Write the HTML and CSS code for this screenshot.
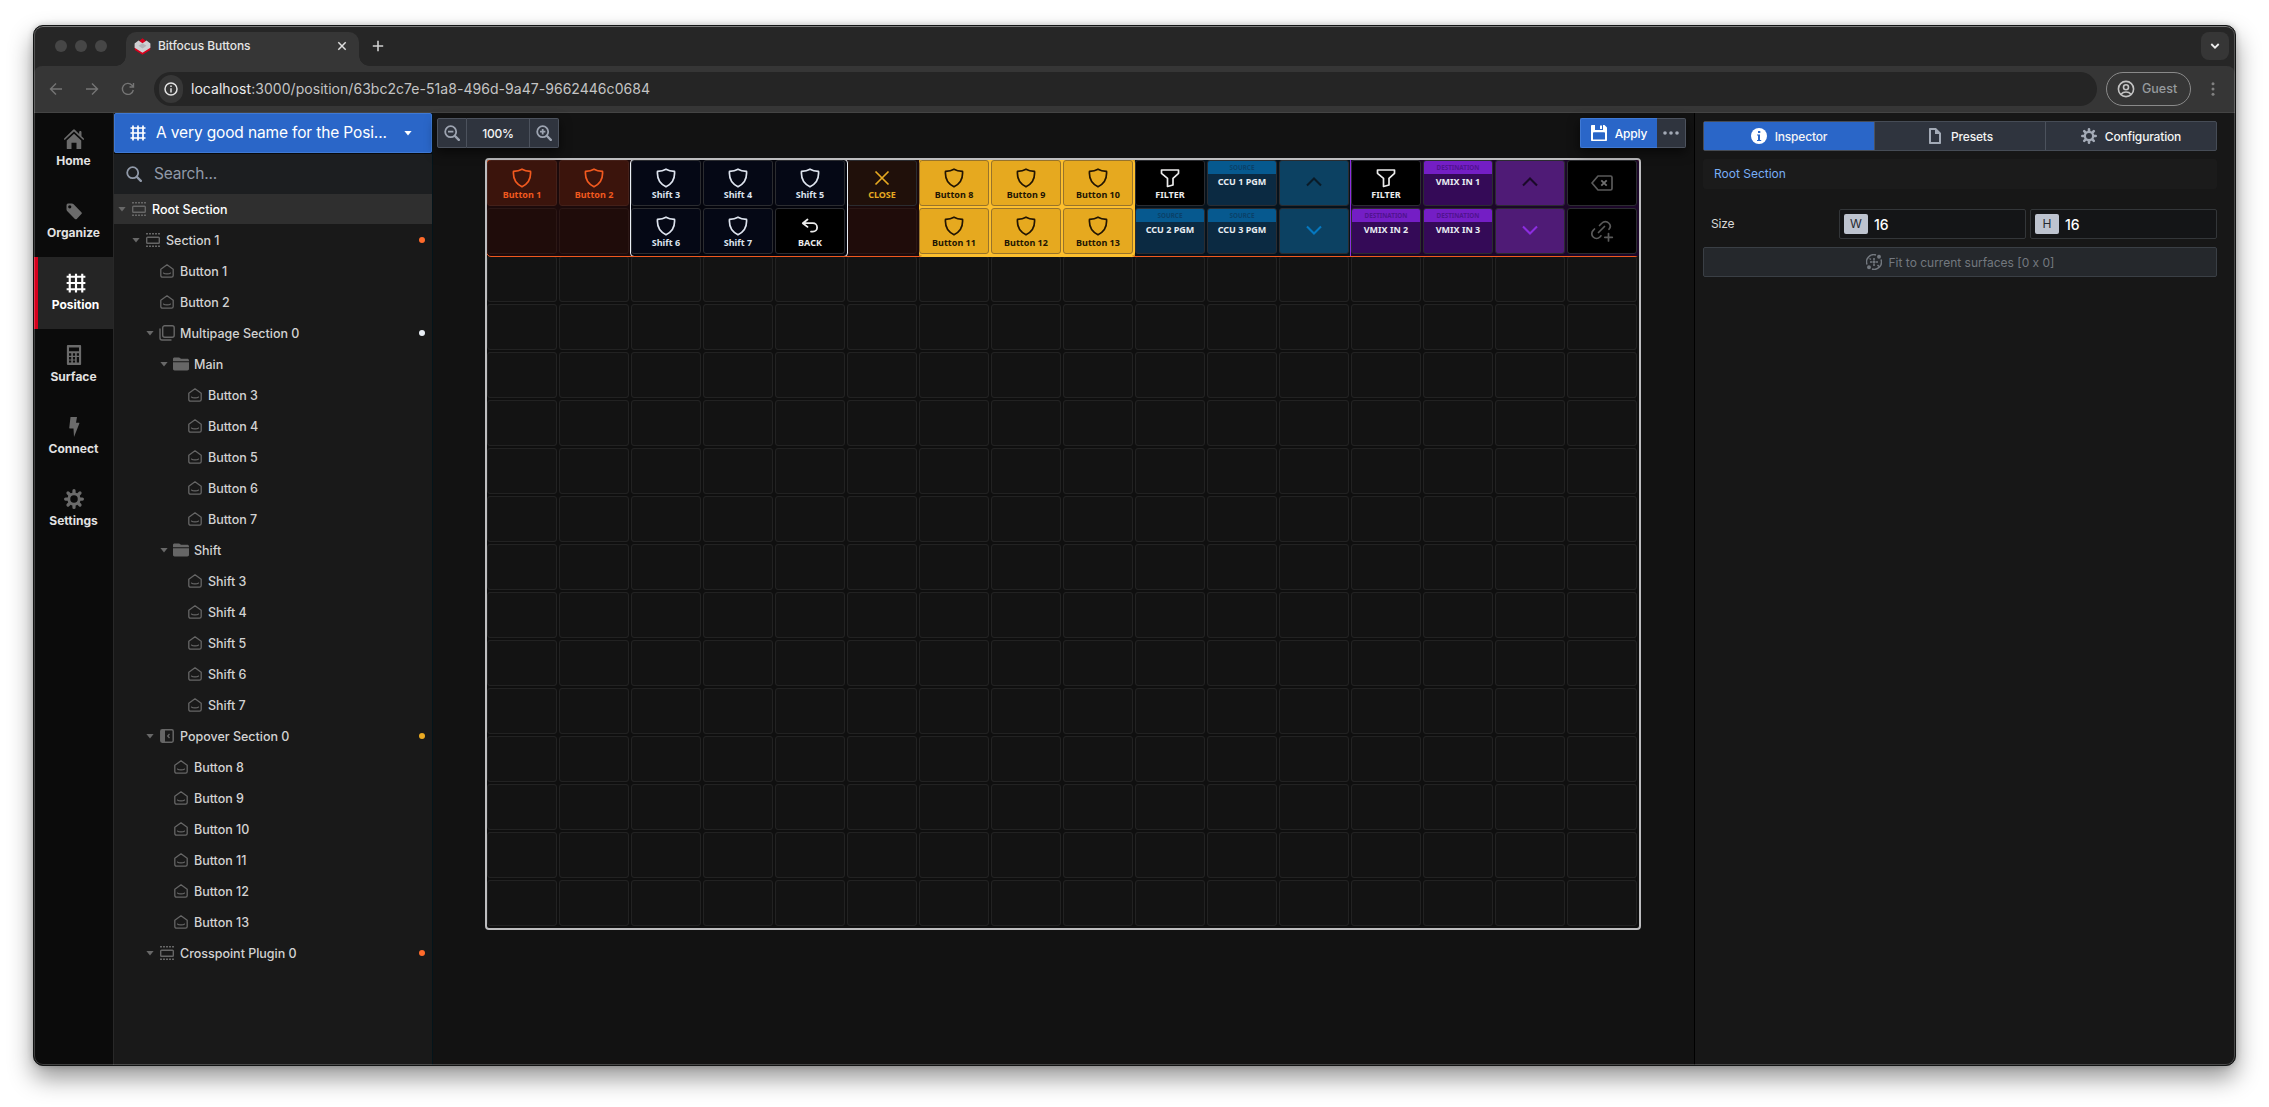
FILE: index.html
```html
<!DOCTYPE html>
<html lang="en">
<head>
<meta charset="utf-8">
<title>Bitfocus Buttons</title>
<link rel="stylesheet" href="styles.css">
</head>
<body>
<svg class="defs" width="0" height="0">
  <symbol id="grid" viewBox="0 0 16 16"><path d="M3 .5v15M8 .5v15M13 .5v15M.5 3h15M.5 8h15M.5 13h15" fill="none" stroke="currentColor" stroke-width="1.7"/></symbol>
  <symbol id="home" viewBox="0 0 16 16"><path d="M8 3.7 2.2 9.1V15.5c0 .3.2.5.5.5H6v-5h4v5h3.300c.3 0 .5-.2.5-.5V9.100zM15.700 7.300 14 5.700V2.500c0-.5-.4-.9-.9-.9s-1 .4-1 .9v1.400L8.700.600a1 1 0 0 0-1.400 0l-7 6.700c-.4.4-.4.900 0 1.200l.3.200L8 2l7.400 6.700.3-.2c.4-.4.4-.8 0-1.200z" fill="currentColor"/></symbol>
  <symbol id="tag" viewBox="0 0 16 16"><path d="M2 3.500C2 2.400 2.800 2 3.500 2H6.200c.6 0 1.100.2 1.500.6l6.200 6.300c.5.5.5 1 0 1.500l-3.700 3.900c-.5.5-1 .5-1.500 0L2.500 8C2.200 7.600 2 7 2 6.500zM4.600 3.300a1.300 1.300 0 1 0 0 2.600 1.300 1.300 0 0 0 0-2.600z" fill="currentColor" fill-rule="evenodd"/></symbol>
  <symbol id="calc" viewBox="0 0 16 16"><path d="M3.200 0h9.600c.5 0 .9.400.9.900v14.200c0 .5-.4.900-.9.900H3.200a.9.900 0 0 1-.9-.9V.900C2.300.400 2.700 0 3.200 0zM4 2v3h8V2zM4 6.500v2h1.800v-2zm3.100 0v2h1.800v-2zm3.100 0v2H12v-2zM4 9.500v2h1.800v-2zm3.100 0v2h1.800v-2zm3.100 0V14H12V9.500zM4 12.300V14h1.800v-1.700zm3.100 0V14h1.800v-1.700z" fill="currentColor" fill-rule="evenodd"/></symbol>
  <symbol id="bolt" viewBox="0 0 16 16"><path d="M5.200 0h5.200l-.8 4.600h2.200c.5 0 .6.400.4.800L8 16l-.4-6.800H4.700c-.4 0-.6-.2-.5-.6z" fill="currentColor"/></symbol>
  <symbol id="cog" viewBox="0 0 16 16"><path d="M8 1.300v13.400M1.300 8h13.400M3.200 3.200l9.600 9.600M12.800 3.200l-9.600 9.600" stroke="currentColor" stroke-width="2.600" stroke-linecap="round" fill="none"/><circle cx="8" cy="8" r="5.300" fill="currentColor"/><circle cx="8" cy="8" r="3" fill="var(--hole)"/></symbol>
  <symbol id="search" viewBox="0 0 16 16"><circle cx="6.700" cy="6.700" r="5.500" fill="none" stroke="currentColor" stroke-width="1.800"/><path d="m11 11 3.800 3.800" stroke="currentColor" stroke-width="2.400" stroke-linecap="round"/></symbol>
  <symbol id="zoomout" viewBox="0 0 16 16"><use href="#search"/><path d="M4 6.700h5.400" stroke="currentColor" stroke-width="1.800"/></symbol>
  <symbol id="zoomin" viewBox="0 0 16 16"><use href="#zoomout"/><path d="M6.700 4v5.400" stroke="currentColor" stroke-width="1.800"/></symbol>
  <symbol id="section" viewBox="0 0 14 14"><rect x=".7" y="4.200" width="12.600" height="6" rx=".8" fill="none" stroke="currentColor" stroke-width="1.400"/><path d="M0 .8h14M0 13.200h14" stroke="currentColor" stroke-width="1.500" stroke-dasharray="2 1"/></symbol>
  <symbol id="button" viewBox="0 0 14 14"><path d="M.8 5.300 7 .8l6.200 4.500v6.200a1.700 1.700 0 0 1-1.700 1.700h-9A1.700 1.700 0 0 1 .8 11.500zM3.600 9.100c1 1.100 5.800 1.100 6.800 0" fill="none" stroke="currentColor" stroke-width="1.300" stroke-linejoin="round" stroke-linecap="round"/></symbol>
  <symbol id="multi" viewBox="0 0 16 16"><rect x="3.700" y=".8" width="11.500" height="11.500" rx="2" fill="none" stroke="currentColor" stroke-width="1.400"/><path d="M1 4v9a2 2 0 0 0 2 2h9" fill="none" stroke="currentColor" stroke-width="1.400" stroke-linecap="round"/></symbol>
  <symbol id="folder" viewBox="0 0 16 14"><path d="M0 4.300V2C0 1 .7.500 1.500.500h4.300c.6 0 1 .2 1.300.6l.7.700h6.400c1 0 1.800.7 1.800 1.600v.9z" fill="currentColor"/><path d="M0 5.200h16v6.600c0 1-.7 1.700-1.700 1.700H1.700C.7 13.500 0 12.800 0 11.800z" fill="currentColor"/></symbol>
  <symbol id="popover" viewBox="0 0 14 14"><rect x=".8" y=".8" width="12.400" height="12.400" rx="1.400" fill="none" stroke="currentColor" stroke-width="1.500"/><path d="M1 1h4v12H1z" fill="currentColor"/><path d="M9.500 5 7.700 7l1.800 2" fill="none" stroke="currentColor" stroke-width="1.300"/></symbol>
  <symbol id="shield" viewBox="0 0 20 20"><path d="M10 1.200c2.400 1.400 5 2 8.500 2.200.6 7-2.500 12.500-8.500 15.400C4 15.900.9 10.400 1.500 3.400 5 3.200 7.600 2.600 10 1.200z" fill="none" stroke="currentColor" stroke-width="1.700" stroke-linejoin="round"/></symbol>
  <symbol id="undo" viewBox="0 0 20 20"><path d="M7.500 3.500 2.800 7.200l4.700 3.700M3.200 7.200h9.700a4.200 4.200 0 0 1 0 8.400H11" fill="none" stroke="currentColor" stroke-width="1.800" stroke-linecap="round" stroke-linejoin="round"/></symbol>
  <symbol id="cross" viewBox="0 0 20 20"><path d="m3.500 3.500 13 13m0-13-13 13" stroke="currentColor" stroke-width="1.700"/></symbol>
  <symbol id="filter" viewBox="0 0 20 20"><path d="M1.500 2h17v3.300l-5.500 5V17l-5.500 1.500V10.300L1.500 5.300z" fill="none" stroke="currentColor" stroke-width="1.700" stroke-linejoin="round"/></symbol>
  <symbol id="up" viewBox="0 0 16 10"><path d="M1 8.500 8 1.500l7 7" fill="none" stroke="currentColor" stroke-width="2.100"/></symbol>
  <symbol id="down" viewBox="0 0 16 10"><path d="m1 1.500 7 7 7-7" fill="none" stroke="currentColor" stroke-width="2.100"/></symbol>
</svg>

<div class="window">
  <header class="tabstrip">
    <span class="light"></span><span class="light"></span><span class="light"></span>
    <div class="tab">
      <svg width="17" height="17" viewBox="0 0 17 17"><path d="M8.500.300 12.500 3.500 8.500 6 4.500 3.500zM.8 8v4L8.500 16.700l7.700-4.700V8l-7.700 5z" fill="#d6001c"/><path d="M4.500 2.500 8.500 5.200l4-2.700 3.900 3v4.300l-7.900 5-7.900-5V5.500z" fill="#cfcfd2"/><path d="m8.500 5.200 4 2.600-4 2.700-4-2.700z" fill="#b3b3b7"/></svg>
      <span class="tab-title">Bitfocus Buttons</span>
      <svg width="10" height="10" viewBox="0 0 10 10"><path d="m1.300 1.300 7.400 7.400m0-7.400L1.300 8.700" stroke="#dedede" stroke-width="1.500"/></svg>
    </div>
    <svg class="newtab" width="12" height="12" viewBox="0 0 12 12"><path d="M6 .8v10.400M.8 6h10.400" stroke="#d0d0d0" stroke-width="1.600"/></svg>
    <span class="tabsearch"><svg width="10" height="8" viewBox="0 0 10 8"><path d="m1.300 2 3.700 3.700L8.700 2" fill="none" stroke="#eee" stroke-width="1.800"/></svg></span>
  </header>
  <div class="toolbar">
    <svg class="nav-ic" width="14" height="14" viewBox="0 0 14 14"><path d="M13 7H1.700M7 1.500 1.500 7 7 12.500" fill="none" stroke="currentColor" stroke-width="1.400"/></svg>
    <svg class="nav-ic" width="14" height="14" viewBox="0 0 14 14"><path d="M1 7h11.300M7 1.500 12.500 7 7 12.500" fill="none" stroke="currentColor" stroke-width="1.400"/></svg>
    <svg class="nav-ic" width="14" height="14" viewBox="0 0 14 14"><path d="M12.300 8A5.500 5.500 0 1 1 11 3.200l1.300 1.300M12.500 1v4h-4" fill="none" stroke="currentColor" stroke-width="1.400"/></svg>
    <div class="url">
      <span class="info"><svg width="14" height="14" viewBox="0 0 14 14"><circle cx="7" cy="7" r="6" fill="none" stroke="#e3e3e3" stroke-width="1.500"/><path d="M7 6.200v4.300M7 3.500V5" stroke="#e3e3e3" stroke-width="1.500"/></svg></span>
      <span class="addr"><b>localhost</b>:3000/position/63bc2c7e-51a8-496d-9a47-9662446c0684</span>
    </div>
    <div class="guest">
      <svg width="18" height="18" viewBox="0 0 18 18" fill="none" stroke="#c4c4c4" stroke-width="1.600"><circle cx="9" cy="9" r="7.600"/><circle cx="9" cy="7.300" r="2.500"/><path d="M4 14.200c1.300-1.500 3-2.200 5-2.200s3.700.7 5 2.200"/></svg>
      <span>Guest</span>
    </div>
    <svg class="kebab" width="4" height="14" viewBox="0 0 4 14" fill="#818181"><circle cx="2" cy="1.700" r="1.500"/><circle cx="2" cy="7" r="1.500"/><circle cx="2" cy="12.300" r="1.500"/></svg>
  </div>

  <main class="app">
    <nav class="nav">
      <a class="nav-item"><svg class="i20"><use href="#home"/></svg>Home</a>
      <a class="nav-item"><svg class="i20"><use href="#tag"/></svg>Organize</a>
      <a class="nav-item active"><svg class="i20"><use href="#grid"/></svg>Position</a>
      <a class="nav-item"><svg class="i20"><use href="#calc"/></svg>Surface</a>
      <a class="nav-item"><svg class="i20"><use href="#bolt"/></svg>Connect</a>
      <a class="nav-item"><svg class="i20"><use href="#cog"/></svg>Settings</a>
    </nav>

    <aside class="sidebar">
      <div class="picker"><svg class="i16"><use href="#grid"/></svg><span>A very good name for the Posi...</span><i class="caret white"></i></div>
      <div class="search"><svg class="i16"><use href="#search"/></svg><span>Search...</span></div>
      <ul class="tree">
        <li class="l0 selected"><i class="caret"></i><svg class="i14"><use href="#section"/></svg>Root Section</li>
        <li class="l1"><i class="caret"></i><svg class="i14"><use href="#section"/></svg>Section 1<em class="dot orange"></em></li>
        <li class="l2 leaf"><svg class="i14"><use href="#button"/></svg>Button 1</li>
        <li class="l2 leaf"><svg class="i14"><use href="#button"/></svg>Button 2</li>
        <li class="l2"><i class="caret"></i><svg class="i16 wide"><use href="#multi"/></svg>Multipage Section 0<em class="dot white"></em></li>
        <li class="l3"><i class="caret"></i><svg class="i16 wide"><use href="#folder"/></svg>Main</li>
        <li class="l4 leaf"><svg class="i14"><use href="#button"/></svg>Button 3</li>
        <li class="l4 leaf"><svg class="i14"><use href="#button"/></svg>Button 4</li>
        <li class="l4 leaf"><svg class="i14"><use href="#button"/></svg>Button 5</li>
        <li class="l4 leaf"><svg class="i14"><use href="#button"/></svg>Button 6</li>
        <li class="l4 leaf"><svg class="i14"><use href="#button"/></svg>Button 7</li>
        <li class="l3"><i class="caret"></i><svg class="i16 wide"><use href="#folder"/></svg>Shift</li>
        <li class="l4 leaf"><svg class="i14"><use href="#button"/></svg>Shift 3</li>
        <li class="l4 leaf"><svg class="i14"><use href="#button"/></svg>Shift 4</li>
        <li class="l4 leaf"><svg class="i14"><use href="#button"/></svg>Shift 5</li>
        <li class="l4 leaf"><svg class="i14"><use href="#button"/></svg>Shift 6</li>
        <li class="l4 leaf"><svg class="i14"><use href="#button"/></svg>Shift 7</li>
        <li class="l2"><i class="caret"></i><svg class="i14"><use href="#popover"/></svg>Popover Section 0<em class="dot yellow"></em></li>
        <li class="l3 leaf"><svg class="i14"><use href="#button"/></svg>Button 8</li>
        <li class="l3 leaf"><svg class="i14"><use href="#button"/></svg>Button 9</li>
        <li class="l3 leaf"><svg class="i14"><use href="#button"/></svg>Button 10</li>
        <li class="l3 leaf"><svg class="i14"><use href="#button"/></svg>Button 11</li>
        <li class="l3 leaf"><svg class="i14"><use href="#button"/></svg>Button 12</li>
        <li class="l3 leaf"><svg class="i14"><use href="#button"/></svg>Button 13</li>
        <li class="l2"><i class="caret"></i><svg class="i14"><use href="#section"/></svg>Crosspoint Plugin 0<em class="dot orange"></em></li>
      </ul>
    </aside>

    <section class="canvas">
      <div class="canvas-bar">
        <div class="btn-group">
          <span class="btn z"><svg class="i16"><use href="#zoomout"/></svg></span>
          <span class="btn pct">100%</span>
          <span class="btn z"><svg class="i16"><use href="#zoomin"/></svg></span>
        </div>
        <div class="btn-group">
          <span class="btn apply"><svg width="16" height="16" viewBox="0 0 16 16"><path d="M0 .8C0 .4.400 0 .8 0H4v5h8V0h1.500L16 2.500v12.700c0 .4-.4.800-.8.800H.8a.8.800 0 0 1-.8-.8zM2 8v6.500h12V8c0-.5-.3-.8-.8-.8H2.800c-.5 0-.8.3-.8.8zM9 .5h2V4H9z" fill="#fff" fill-rule="evenodd"/></svg>Apply</span>
          <span class="btn more"><svg width="16" height="4" viewBox="0 0 16 4" fill="#a3aab6"><circle cx="2" cy="2" r="1.800"/><circle cx="8" cy="2" r="1.800"/><circle cx="14" cy="2" r="1.800"/></svg></span>
        </div>
      </div>

      <div class="board">
        <div class="root-row">
          <div class="group c2">
            <div class="cell fire"><svg class="i20"><use href="#shield"/></svg>Button 1</div>
            <div class="cell fire"><svg class="i20"><use href="#shield"/></svg>Button 2</div>
            <div class="cell empty"></div>
            <div class="cell empty"></div>
          </div>
          <div class="group c3 multipage">
            <div class="cell navy"><svg class="i20"><use href="#shield"/></svg>Shift 3</div>
            <div class="cell navy"><svg class="i20"><use href="#shield"/></svg>Shift 4</div>
            <div class="cell navy"><svg class="i20"><use href="#shield"/></svg>Shift 5</div>
            <div class="cell navy"><svg class="i20"><use href="#shield"/></svg>Shift 6</div>
            <div class="cell navy"><svg class="i20"><use href="#shield"/></svg>Shift 7</div>
            <div class="cell black"><svg class="i20"><use href="#undo"/></svg>BACK</div>
          </div>
          <div class="group c1">
            <div class="cell close"><svg class="i20"><use href="#cross"/></svg>CLOSE</div>
            <div class="cell empty"></div>
          </div>
          <div class="group c3 pop">
            <div class="cell gold"><svg class="i20"><use href="#shield"/></svg>Button 8</div>
            <div class="cell gold"><svg class="i20"><use href="#shield"/></svg>Button 9</div>
            <div class="cell gold"><svg class="i20"><use href="#shield"/></svg>Button 10</div>
            <div class="cell gold"><svg class="i20"><use href="#shield"/></svg>Button 11</div>
            <div class="cell gold"><svg class="i20"><use href="#shield"/></svg>Button 12</div>
            <div class="cell gold"><svg class="i20"><use href="#shield"/></svg>Button 13</div>
          </div>
          <div class="group c3 sources">
            <div class="cell black"><svg class="i20"><use href="#filter"/></svg>FILTER</div>
            <div class="cell source"><small>SOURCE</small>CCU 1 PGM</div>
            <div class="cell blue"><svg class="chev"><use href="#up"/></svg></div>
            <div class="cell source"><small>SOURCE</small>CCU 2 PGM</div>
            <div class="cell source"><small>SOURCE</small>CCU 3 PGM</div>
            <div class="cell blue lit"><svg class="chev"><use href="#down"/></svg></div>
          </div>
          <div class="group c4 dests">
            <div class="cell black"><svg class="i20"><use href="#filter"/></svg>FILTER</div>
            <div class="cell dest"><small>DESTINATION</small>VMIX IN 1</div>
            <div class="cell purple"><svg class="chev"><use href="#up"/></svg></div>
            <div class="cell black tool"><svg width="22" height="16" viewBox="0 0 22 16"><path d="M7 1h12.500c.8 0 1.500.7 1.500 1.500v11c0 .8-.7 1.500-1.500 1.500H7L1 8z" fill="none" stroke="#5a5a5a" stroke-width="1.700" stroke-linejoin="round"/><path d="m10.300 5.300 5.400 5.400m0-5.400-5.400 5.400" stroke="#707070" stroke-width="1.800"/></svg></div>
            <div class="cell dest"><small>DESTINATION</small>VMIX IN 2</div>
            <div class="cell dest"><small>DESTINATION</small>VMIX IN 3</div>
            <div class="cell purple lit"><svg class="chev"><use href="#down"/></svg></div>
            <div class="cell black tool"><svg width="24" height="22" viewBox="0 0 24 22" fill="none" stroke="#5a5a5a" stroke-width="1.700" stroke-linecap="round"><path d="m8.500 12.500 6-6M9.500 5.500 12 3a4.600 4.600 0 0 1 6.700 0c1.900 1.900 1.900 4.500.3 6.300M4.500 9 3.200 10.300a4.700 4.700 0 0 0 0 6.700c1.900 1.900 4.800 1.900 6.700 0l1.100-1.200M18.500 13.500v7.500M14.800 17.300h7.500"/></svg></div>
          </div>
        </div>
        <svg class="free-cells" width="1152" height="672">
          <defs><pattern id="slot" width="72" height="48" patternUnits="userSpaceOnUse"><rect x=".5" y=".5" width="69" height="45" rx="2.500" fill="#131313" stroke="#222"/></pattern></defs>
          <rect width="1152" height="672" fill="url(#slot)"/>
        </svg>
      </div>
    </section>

    <aside class="inspector">
      <div class="tabs">
        <span class="on"><svg width="16" height="16" viewBox="0 0 16 16"><circle cx="8" cy="8" r="8" fill="#fff"/><path d="M7 3h2.300v2H7zM6 6.500h3V12h1.200v1H6v-1h1V7.500H6z" fill="#2a66c8"/></svg>Inspector</span>
        <span><svg width="16" height="16" viewBox="0 0 16 16"><path d="M9 0H3c-.6 0-1 .4-1 1v14c0 .6.400 1 1 1h10c.6 0 1-.4 1-1V5zm3 14H4V2h4v4h4z" fill="#a3aab6"/></svg>Presets</span>
        <span><svg class="i16 cog"><use href="#cog"/></svg>Configuration</span>
      </div>
      <div class="crumb">Root Section</div>
      <div class="size">
        <label>Size</label>
        <div class="field"><b>W</b>16</div>
        <div class="field"><b>H</b>16</div>
      </div>
      <div class="fit"><svg width="16" height="16" viewBox="0 0 16 16" fill="none" stroke="currentColor" stroke-width="1.500"><path d="M1 10.500A7.300 7.300 0 0 1 10 1M6 15A7.300 7.300 0 0 0 15 5.500"/><path d="M8 4v2.500M8 9.500V12M4 8h2.500M9.500 8H12" stroke-width="1.600"/><circle cx="13" cy="2.800" r="1.200" fill="currentColor"/><circle cx="3" cy="13.200" r="1.200" fill="currentColor"/><circle cx="8" cy="8" r=".5"/><path d="m11.500 11 1.500 1.500M3.500 4.500 5 5.500"/></svg>Fit to current surfaces [0 x 0]</div>
    </aside>
  </main>
</div>
</body>
</html>
```
FILE: styles.css
```css
* { box-sizing: border-box; }
body {
  margin: 0;
  height: 1107px;
  padding: 25px 33px 41px 33px;
  background: #fff;
  overflow: hidden;
  font-family: Inter, "Liberation Sans", sans-serif;
  font-size: 12.5px;
  color: #d8d8d8;
}
svg { flex: none; display: block; }
.defs { position: absolute; }
.i14 { width: 14px; height: 14px; }
.i16 { width: 16px; height: 16px; }
.i20 { width: 20px; height: 20px; }

.window {
  height: 1041px;
  border: 1px solid #121414;
  border-radius: 10px;
  overflow: hidden;
  position: relative;
  display: flex;
  flex-direction: column;
  background: #262626;
  box-shadow: 0 12px 24px rgba(0, 0, 0, .42), 0 0 6px rgba(0, 0, 0, .2);
}
/* light hairline just inside the window edge */
.window::after {
  content: "";
  position: absolute;
  inset: 0;
  border: 1px solid rgba(255, 255, 255, .22);
  border-top-color: rgba(255, 255, 255, .4);
  border-radius: 9px;
}

/* browser chrome */
.tabstrip {
  height: 40px;
  flex: none;
  background: #262626;
  display: flex;
  align-items: center;
  padding: 0 6px 0 21px;
}
.light { width: 12px; height: 12px; border-radius: 50%; background: #464646; margin-right: 8px; }
.tab {
  align-self: flex-end;
  position: relative;
  width: 233px;
  height: 34px;
  margin-left: 11px;
  padding: 0 12px 6px 8px;
  display: flex;
  align-items: center;
  background: #363636;
  border-radius: 10px 10px 0 0;
}
.tab::before, .tab::after {
  content: "";
  position: absolute;
  bottom: 0;
  width: 10px;
  height: 10px;
}
.tab::before { left: -10px; background: radial-gradient(circle at 0 0, #262626 9.500px, #363636 10px); }
.tab::after { right: -10px; background: radial-gradient(circle at 100% 0, #262626 9.500px, #363636 10px); }
.tab-title { flex: 1; margin-left: 7px; padding-bottom: 1px; font-size: 12px; font-weight: 500; letter-spacing: -.08px; color: #e4e4e4; }
.newtab { margin-left: 13px; }
.tabsearch {
  width: 28px;
  height: 28px;
  margin-left: auto;
  border-radius: 8px;
  background: #363636;
  display: grid;
  place-items: center;
}
.toolbar {
  height: 47px;
  flex: none;
  display: flex;
  align-items: center;
  padding: 0 20px 1px 15px;
  background: #363636;
  border-radius: 8px 8px 0 0;
  border-bottom: 1px solid #444;
}
.nav-ic { color: #757575; margin-right: 22px; }
.url {
  flex: 1;
  height: 34px;
  margin-left: -3px;
  padding-left: 5px;
  border-radius: 17px;
  background: #252525;
  display: flex;
  align-items: center;
}
.info { width: 24px; height: 28px; border-radius: 14px; background: #373737; display: grid; place-items: center; }
.addr { margin-left: 8px; font-size: 14px; letter-spacing: .04px; color: #c4c4c4; }
.addr b { font-weight: 400; color: #ececec; }
.guest {
  width: 85px;
  height: 34px;
  margin: 0 20px 0 9px;
  padding-left: 10px;
  border: 1px solid #8a8a8a;
  border-radius: 17px;
  display: flex;
  align-items: center;
  gap: 7px;
  color: #969b9e;
  font-size: 12.500px;
  font-weight: 500;
}

/* application shell */
.app { flex: 1; min-height: 0; display: flex; background: #121212; }
.nav { width: 80px; background: #0b0b0b; border-right: 1px solid #282828; --hole: #0b0b0b; }
.nav-item {
  height: 72px;
  display: flex;
  flex-direction: column;
  align-items: center;
  padding-top: 16px;
  gap: 4px;
  font-size: 12px;
  font-weight: 700;
  line-height: 15px;
  color: #e2e2e2;
}
.nav-item svg { color: #6b6b6b; }
.nav-item.active { background: #252525; border-left: 4px solid #d6001c; color: #fff; }
.nav-item.active svg { color: #fff; }

.sidebar { width: 319px; background: #191919; border-right: 1px solid #04141a; }
.picker {
  height: 40px;
  padding: 0 19px 0 15px;
  background: #2a66c8;
  border: 1px solid #3f79d4;
  border-radius: 2px;
  display: flex;
  align-items: center;
  color: #fff;
  font-size: 15.500px;
  font-weight: 400;
  letter-spacing: -.14px;
  line-height: 22px;
}
.picker span { margin-left: 10px; flex: 1; }
.search {
  height: 41px;
  padding: 0 12px;
  background: #1c1e20;
  border-top: 1px solid #07090b;
  display: flex;
  align-items: center;
  gap: 12px;
  font-size: 15.500px;
  letter-spacing: -.2px;
  color: #9099a8;
}
.search span { padding-bottom: 1px; }
.caret {
  width: 8px;
  height: 5px;
  background: #686868;
  clip-path: polygon(0 0, 100% 0, 50% 100%);
}
.caret.white { background: #fff; }
.tree { list-style: none; margin: 0; padding: 0; display: grid; gap: 1px; }
.tree li {
  height: 30px;
  display: flex;
  align-items: center;
  gap: 6px;
  padding-right: 7px;
  font-weight: 500;
  letter-spacing: -.01px;
  color: #d2d2d2;
}
.tree svg { color: #666; }
.tree .wide { margin: 0 -1px; }
.tree li.selected { background: #2f2f2f; color: #fff; }
.l0 { padding-left: 4px; }
.l1 { padding-left: 18px; }
.l2 { padding-left: 32px; }
.l3 { padding-left: 46px; }
.l4 { padding-left: 60px; }
.leaf.l2 { padding-left: 46px; }
.leaf.l3 { padding-left: 60px; }
.leaf.l4 { padding-left: 74px; }
.dot { width: 6px; height: 6px; border-radius: 50%; margin-left: auto; }
.dot.orange { background: #ff6b2b; }
.dot.white { background: #e9eef5; }
.dot.yellow { background: #eaaa22; }

/* canvas */
.canvas { flex: 1; background: #121212; }
.canvas-bar { height: 45px; padding: 5px 8px 0 4px; display: flex; justify-content: space-between; align-items: flex-start; }
.btn-group { display: flex; box-shadow: 0 4px 12px rgba(0, 0, 0, .6); }
.btn {
  height: 30px;
  background: #2f343e;
  border: 1px solid #4c525d;
  border-left-width: 0;
  display: flex;
  align-items: center;
  justify-content: center;
  color: #fff;
  font-size: 12px;
  font-weight: 500;
  letter-spacing: -.2px;
}
.btn:first-child { border-left-width: 1px; border-radius: 2px 0 0 2px; }
.btn:last-child { border-radius: 0 2px 2px 0; }
.btn.z { width: 29px; color: #9da4b1; }
.btn.z:first-child { width: 30px; }
.btn.pct { width: 63px; color: #f4f4f4; }
.btn.apply { width: 77px; gap: 8px; background: #2a66c8; border-color: #3f79d4; border-right: 0; }
.btn.more { width: 29px; }

.board { width: 1156px; margin-left: 52px; border: 2px solid #bdbdbf; border-radius: 4px; overflow: hidden; background: #0f0f0f; }
.root-row { position: relative; display: flex; background: #1c0a0b; outline: 1px solid #f0591f; border-radius: 4px; z-index: 1; }
.group { display: grid; gap: 2px; padding: 0 2px 2px 0; grid-auto-rows: 46px; }
.c1 { grid-template-columns: 70px; }
.c2 { grid-template-columns: repeat(2, 70px); }
.c3 { grid-template-columns: repeat(3, 70px); }
.c4 { grid-template-columns: repeat(4, 70px); }
.multipage { background: #04050d; outline: 1px solid #e9eef5; border-radius: 3px; z-index: 1; clip-path: inset(0 -1px 0 -1px); }
.pop { background: #fdbf2d; outline: 1px solid #fdbf2d; border-radius: 3px; z-index: 2; clip-path: inset(0 0 -1px 0); }
.sources { background: #06121c; }
.dests { background: #1c0729; outline: 1px solid #8c2de0; clip-path: inset(0 0 0 -1px); }

.cell {
  border: 1px solid #2b2c30;
  border-radius: 3px;
  display: flex;
  flex-direction: column;
  align-items: center;
  overflow: hidden;
  padding-top: 7px;
  gap: 0;
  font: 700 9px/14px "Noto Sans", sans-serif;
}
.cell.fire { background: #3b140c; border-color: #442019; color: #f1591f; }
.cell.empty { background: #1f0c0a; border-color: #2b1715; }
.cell.navy { background: #050815; color: #dde3ee; }
.cell.black { background: #000; color: #ececec; }
.cell.close { background: #20100a; color: #e6a921; }
.cell.gold { background: #e6a91f; border-color: #97732b; color: #221503; }
.cell.source, .cell.dest { padding-top: 0; gap: 1px; color: #e8edf2; }
.cell.source { background: #0b2a42; }
.cell.dest { background: #340a57; }
.cell small { align-self: stretch; height: 13px; text-align: center; font-size: 6.300px; line-height: 14px; }
.source small { background: #06598f; color: #0a4169; }
.dest small { background: #741ec5; color: #511390; }
.cell.blue, .cell.purple { padding-top: 16px; }
.chev { width: 16px; height: 10px; }
.cell.blue { background: #0c4162; color: #0a1b28; }
.cell.blue.lit { color: #0578c0; }
.cell.purple { background: #4f1b76; color: #1a0a29; }
.cell.purple.lit { color: #8c2de0; }
.cell.tool { padding: 0; justify-content: center; }

/* inspector */
.inspector { width: 541px; padding: 8px 18px 0 8px; background: #171717; border-left: 1px solid #000; }
.tabs { display: flex; border: 1px solid #464c56; border-radius: 2px; background: #2f343e; }
.tabs span {
  flex: 1;
  height: 28px;
  border-left: 1px solid #4c525d;
  display: flex;
  align-items: center;
  justify-content: center;
  gap: 8px;
  color: #f4f4f4;
  font-size: 12px;
  font-weight: 500;
  letter-spacing: -.17px;
}
.tabs span.on { border: 0; background: #2a66c8; }
.cog { color: #a3aab6; --hole: #2f343e; }
.crumb { height: 30px; margin-top: 8px; padding-left: 11px; border-radius: 3px; background: #1b1b1b; line-height: 29px; font-size: 12px; color: #78aef5; }
.size { display: flex; gap: 4px; margin-top: 20px; align-items: center; }
.size label { width: 132px; padding: 0 0 1px 8px; font-size: 12px; letter-spacing: -.2px; }
.field {
  flex: 1;
  height: 30px;
  padding-left: 4px;
  border: 1px solid #333639;
  border-radius: 2px;
  background: #141517;
  display: flex;
  align-items: center;
  gap: 6px;
  font-size: 14px;
  font-weight: 500;
  color: #fff;
}
.field b { width: 24px; height: 20px; border-radius: 2px; background: #bdc3cf; color: #252a31; text-align: center; font-size: 12px; line-height: 20px; font-weight: 400; }
.fit {
  height: 30px;
  margin-top: 8px;
  border: 1px solid #3a3f45;
  border-radius: 2px;
  background: #25282c;
  display: flex;
  align-items: center;
  justify-content: center;
  gap: 7px;
  font-size: 12px;
  color: #73787f;
}
```
